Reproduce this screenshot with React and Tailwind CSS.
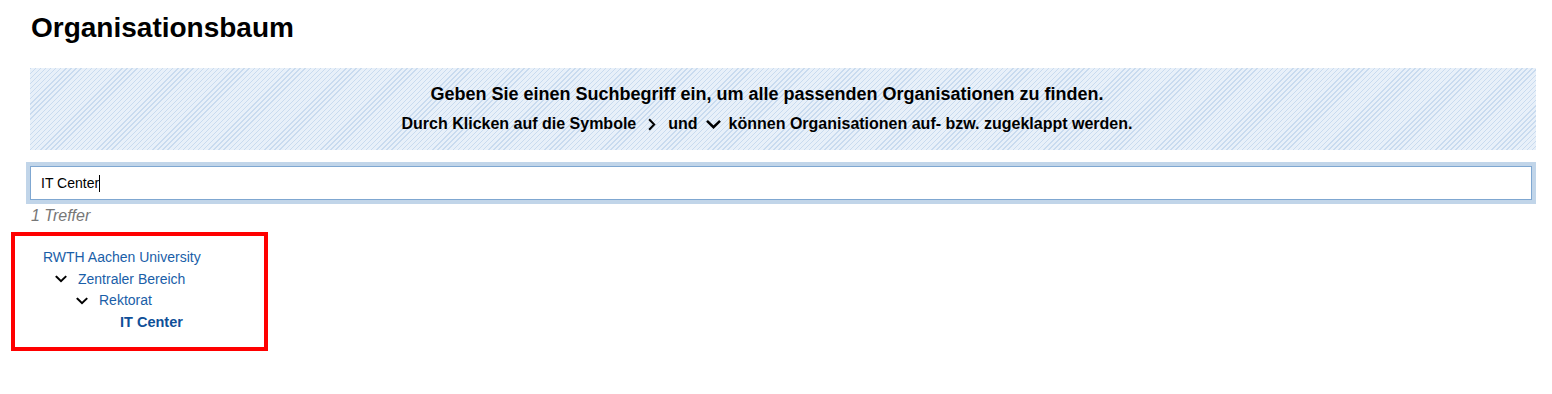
import React from "react";

function Chevron({ dir = "down", className = "" }) {
  return (
    <svg viewBox="0 0 12 12" className={className} fill="none" stroke="currentColor" strokeWidth="2" strokeLinecap="square">
      {dir === "down" ? <path d="M1.5 3.8 L6 8.2 L10.5 3.8" /> : <path d="M3.8 1.5 L8.2 6 L3.8 10.5" />}
    </svg>
  );
}

export default function App() {
  return (
    <div className="w-[1552px] h-[394px] bg-white text-black font-['Liberation_Sans',Arial,sans-serif] overflow-hidden">
      <div className="pl-[30px] pr-[16px] pt-[12px]">
        <h1 className="text-[28px] leading-[32px] font-bold pl-[1px]">Organisationsbaum</h1>
        <div className="mt-[24px] h-[82px] pr-[32px] bg-[#e8f0f9] bg-[repeating-linear-gradient(135deg,#c9dbef_0px,#c9dbef_1px,#e8f0f9_1px,#e8f0f9_3.6px)] flex flex-col items-center justify-center font-bold">
          <div className="text-[18px] leading-[22px] mt-[-1px]">Geben Sie einen Suchbegriff ein, um alle passenden Organisationen zu finden.</div>
          <div className="text-[16px] leading-[20px] mt-[9px] flex items-center">
            <span>Durch Klicken auf die Symbole</span>
            <Chevron dir="right" className="w-[12px] h-[13px] mx-[10px]" />
            <span>und</span>
            <Chevron dir="down" className="w-[15px] h-[15px] mx-[8px]" />
            <span>können Organisationen auf- bzw. zugeklappt werden.</span>
          </div>
        </div>
        <div className="mt-[12px] ml-[-4px] mr-[0px] border-[4px] border-[#c1d5e9]">
          <div className="h-[34px] border border-[#7fa7d1] bg-white flex items-center pl-[10px] text-[14px]">
            <span>IT Center</span>
            <span className="inline-block w-[1px] h-[17px] bg-black ml-[0px]" />
          </div>
        </div>
        <div className="mt-[2px] text-[16px] leading-[20px] italic text-[#777777] pl-[1px]">1 Treffer</div>
      </div>
      <div className="ml-[11px] mt-[6px] w-[257px] h-[119px] border-[4px] border-[#ff0000] pt-[11px] text-[14px] leading-[21.5px] text-[#1a5ea8]">
        <div className="pl-[28px]">RWTH Aachen University</div>
        <div className="pl-[40px] flex items-center">
          <Chevron dir="down" className="w-[12px] h-[12px] text-black" />
          <span className="ml-[11px]">Zentraler Bereich</span>
        </div>
        <div className="pl-[61px] flex items-center">
          <Chevron dir="down" className="w-[12px] h-[12px] text-black" />
          <span className="ml-[11px]">Rektorat</span>
        </div>
        <div className="pl-[105px] font-bold text-[14.5px] text-[#0f4f98]">IT Center</div>
      </div>
    </div>
  );
}
